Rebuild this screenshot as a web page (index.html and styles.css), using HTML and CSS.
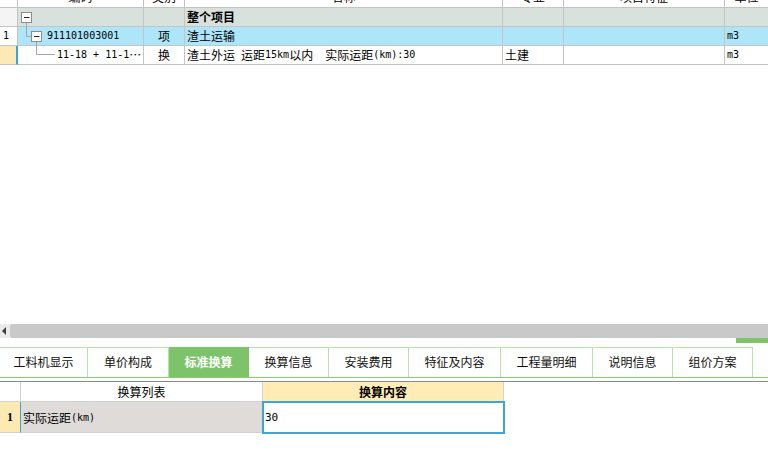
FILE: index.html
```html
<!DOCTYPE html>
<html lang="zh">
<head>
<meta charset="utf-8">
<title>标准换算</title>
<link rel="stylesheet" href="styles.css">
</head>
<body>
<div class="app">
  <div class="top">
    <div class="grid">
      <div class="c h num"></div>
      <div class="c h">编码</div>
      <div class="c h">类别</div>
      <div class="c h">名称</div>
      <div class="c h">专业</div>
      <div class="c h">项目特征</div>
      <div class="c h">单位</div>

      <div class="c num n0"></div>
      <div class="c r0"></div>
      <div class="c r0"></div>
      <div class="c r0 txt b">整个项目</div>
      <div class="c r0"></div>
      <div class="c r0"></div>
      <div class="c r0"></div>

      <div class="c num"><span class="a">1</span></div>
      <div class="c r1 code"><span class="a">911101003001</span></div>
      <div class="c r1 ctr">项</div>
      <div class="c r1 txt">渣土运输</div>
      <div class="c r1"></div>
      <div class="c r1"></div>
      <div class="c r1 txt"><span class="a">m3</span></div>

      <div class="c num cur"></div>
      <div class="c code2"><span class="a">11-18 + 11-1</span>…</div>
      <div class="c ctr">换</div>
      <div class="c txt">渣土外运<span class="a"> </span>运距<span class="a">15km</span>以内<span class="a">  </span>实际运距<span class="a">(km):30</span></div>
      <div class="c txt">土建</div>
      <div class="c"></div>
      <div class="c txt"><span class="a">m3</span></div>
    </div>
    <svg class="tree" width="60" height="70" viewBox="0 0 60 70">
      <path d="M26.5 22.5V36.5H31" class="ln"/>
      <path d="M36.5 41.5V54.5H55" class="ln"/>
      <rect x="21.5" y="12.5" width="10" height="10" class="bx"/>
      <path d="M24 17.5H29.5" class="mn"/>
      <rect x="31.5" y="31.5" width="10" height="10" class="bx"/>
      <path d="M34 36.5H39.5" class="mn"/>
    </svg>
  </div>

  <div class="hscroll">
    <div class="arrow"><span class="tri"></span></div>
    <div class="track"></div>
  </div>
  <div class="strip"><div class="mark"></div></div>

  <div class="tabs">
    <div class="tab first">工料机显示</div>
    <div class="tab w81">单价构成</div>
    <div class="tab active">标准换算</div>
    <div class="tab w79">换算信息</div>
    <div class="tab">安装费用</div>
    <div class="tab wide">特征及内容</div>
    <div class="tab wide">工程量明细</div>
    <div class="tab">说明信息</div>
    <div class="tab">组价方案</div>
  </div>
  <div class="sep"></div>

  <div class="sub">
    <div class="s hd"></div>
    <div class="s hd">换算列表</div>
    <div class="s hd hl">换算内容</div>
    <div class="s rn">1</div>
    <div class="s lab">实际运距<span class="a">(km)</span></div>
    <div class="s val"><span class="a v">30</span></div>
  </div>
</div>
</body>
</html>
```

FILE: styles.css
```css
* { box-sizing: border-box; }
html, body { margin: 0; padding: 0; background: #fff; }
body {
  width: 768px;
  height: 470px;
  overflow: hidden;
  font-family: "Noto Sans CJK SC", "Liberation Sans", sans-serif;
  font-size: 12px;
  color: #000;
}
.app { display: flex; flex-direction: column; }

.a { font-family: "DejaVu Sans Mono", "Liberation Mono", monospace; font-size: 10px; white-space: pre; }

/* top grid */
.top { position: relative; height: 324px; overflow: hidden; }
.grid {
  display: grid;
  grid-template-columns: 18px 126px 41px 318px 61px 161px 44px;
  grid-template-rows: 22px 19px 19px 19px;
  margin-top: -14px;
  width: 769px;
}
.c {
  border-right: 1px solid #c4c4c4;
  border-bottom: 1px solid #c4c4c4;
  display: flex;
  align-items: center;
  white-space: nowrap;
  overflow: hidden;
  line-height: 18px;
}
.h { justify-content: center; }
.num { padding-left: 3px; background: #fff; }
.n0 { background: #f4f4f4; }
.cur { background: #fde9b5; border-right: 2px solid #3aa6d6; }
.r0 { background: #d9e1dd; }
.r1 { background: #ade6f8; }
.txt { padding-left: 2px; }
.b { font-weight: bold; }
.ctr { justify-content: center; }
.code { padding-left: 29px; }
.code2 { padding-left: 39px; }

.tree { position: absolute; left: 0; top: 0; }
.tree .ln { fill: none; stroke: #a6a6a6; stroke-width: 1; }
.tree .bx { fill: #fff; stroke: #8c8c8c; stroke-width: 1; }
.tree .mn { fill: none; stroke: #222; stroke-width: 1; }

/* horizontal scrollbar */
.hscroll { display: flex; height: 14px; }
.arrow { width: 10px; background: #ebebeb; display: flex; align-items: center; padding-left: 2px; }
.tri { width: 0; height: 0; border-top: 4px solid transparent; border-bottom: 4px solid transparent; border-right: 4px solid #404040; }
.track { flex: 1; background: #c9c9c9; border-radius: 2px 0 0 2px; }

.strip { height: 9px; display: flex; justify-content: flex-end; }
.mark { width: 32px; height: 5px; background: #80c46a; }

/* tabs */
.tabs { display: flex; height: 31px; border-bottom: 1px solid #8ccb78; }
.tab {
  width: 80px;
  flex: none;
  text-align: center;
  border-top: 1px solid #b9e1ab;
  border-right: 1px solid #b9e1ab;
  line-height: 28px;
  font-size: 12px;
  color: #111;
  white-space: nowrap;
}
.tab.first { width: 88px; }
.tab.w81 { width: 81px; }
.tab.w79 { width: 80px; }
.tab.wide { width: 92px; }
.tab.active { background: #7dc36a; color: #fff; font-weight: bold; border-color: #7dc36a; }

.sep { height: 4px; border-bottom: 1px solid #8a8a8a; }

/* lower grid */
.sub {
  display: grid;
  grid-template-columns: 21px 242px 241px;
  grid-template-rows: 20px 31px;
  width: 504px;
}
.s {
  border-right: 1px solid #d2d2d2;
  border-bottom: 1px solid #d2d2d2;
  display: flex;
  align-items: center;
  white-space: nowrap;
}
.hd { justify-content: center; background: #fff; }
.hl { background: #ffedb5; font-weight: bold; }
.rn {
  background: #fdeab3;
  border-right: 1px solid #3aa6d6;
  justify-content: center;
  font-family: "Liberation Serif", serif;
  font-weight: bold;
  font-size: 12px;
}
.lab { background: #dfdbd8; padding-left: 2px; }
.val {
  background: #fff;
  padding-left: 2px;
  border: none;
  box-shadow: 0 0 0 1px #3aa6d6, inset 0 0 0 1px #3aa6d6;
}
.v { font-size: 11px; }
```
